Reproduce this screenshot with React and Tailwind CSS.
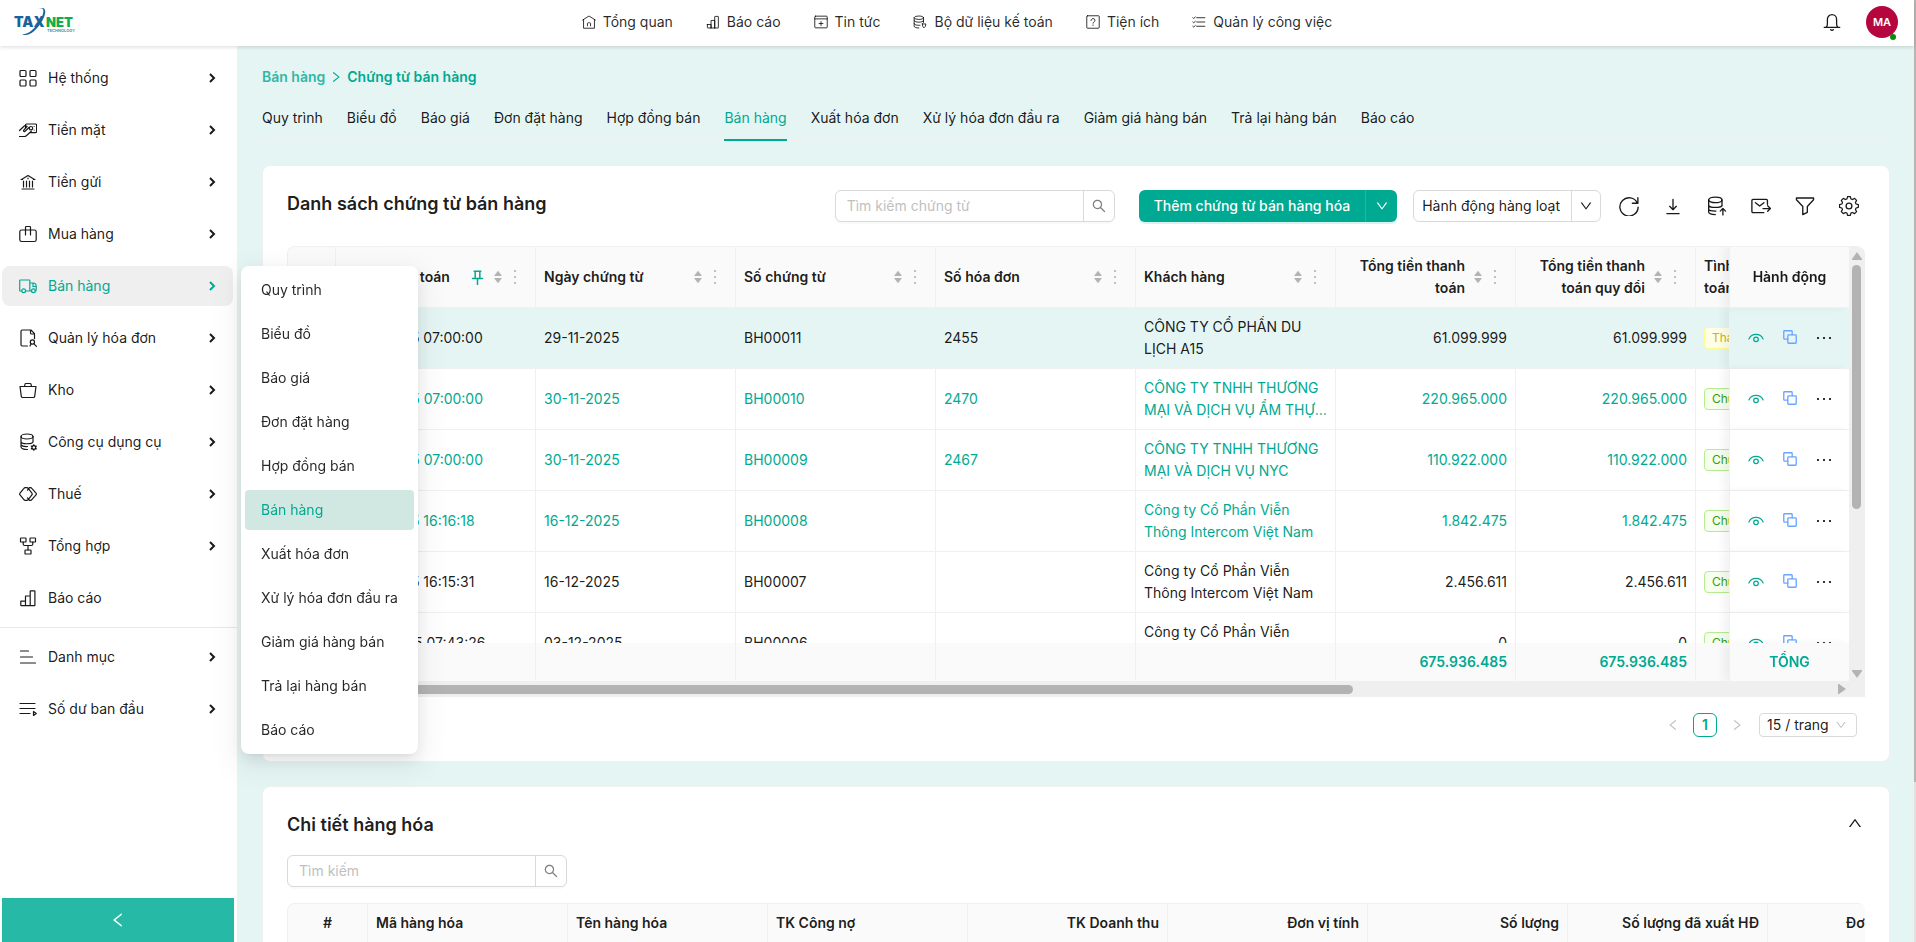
import { useState } from "react";
import clsx from "clsx";
import {
  AiOutlineDown,
  AiOutlineLeft,
  AiOutlineRight,
  AiOutlineSearch,
  AiOutlineUp,
} from "react-icons/ai";

/* ================== ICONS ================== */
const ICONS = {
  grid: (
    <>
      <rect x="1" y="1.5" width="6" height="6" rx="1" />
      <rect x="11" y="1.5" width="6" height="6" rx="1" />
      <rect x="1" y="11" width="6" height="6" rx="1" />
      <rect x="11" y="11" width="6" height="6" rx="1" />
    </>
  ),
  cash: (
    <>
      <path d="M6.5 6.5V4.2c0-.7.4-1.2 1.1-1.2h9c.6 0 1 .4 1 1v6.600c0 .6-.4 1-1 1h-5" />
      <circle cx="12" cy="7.200" r="1.700" />
      <path d="M15.200 5.500v.01M15.200 9v.01" />
      <path d="M.5 9.500 5 5.200c.6-.6 1.300-.8 2-.5M.5 15.500h4.700c.8 0 1.500-.3 2.100-.8l5-4.500M10 6.500 6 10.200c-.9.800-2-.2-1.200-1.100L8 5.500" />
    </>
  ),
  bank: (
    <>
      <path d="M2.500 6.500 9 2.500l6.500 4M2 6.500h1.500M14.500 6.500H16M9 5v.8M4.500 8v6M7.500 8v6M10.500 8v6M13.500 8v6M3 16h12" />
    </>
  ),
  bag: (
    <>
      <rect x=".8" y="5" width="16.400" height="11.500" rx="1.800" />
      <path d="M6.500 10V2.300c0-.5.3-.8.8-.8h3.400c.5 0 .8.300.8.800V10" />
    </>
  ),
  truck: (
    <>
      <path d="M2.500 14H1.300c-.4 0-.6-.3-.6-.6V3.600c0-.4.3-.6.6-.6h8.900c.4 0 .6.300.6.600V14H7M10.800 6h3.400c1.700 0 3 1.600 3 3.500V13c0 .6-.4 1-1 1M12.800 14h-2M14 6v3.500h3" />
      <circle cx="4.700" cy="13.700" r="1.900" />
      <circle cx="14.400" cy="13.700" r="1.900" />
    </>
  ),
  fileSearch: (
    <>
      <path d="M8.500 17H3.200c-.7 0-1.200-.5-1.200-1.200V2.200C2 1.500 2.500 1 3.200 1H12l3.500 3.700v5M11.500 1v3c0 .6.400 1 1 1h3" />
      <circle cx="13.400" cy="13" r="2.100" />
      <path d="m15 14.800 2.400 2.500M12 15l-1 2" />
    </>
  ),
  basket: (
    <>
      <path d="M1 5.500h16l-1.300 9.800c-.1.700-.6 1.200-1.300 1.200H3.600c-.7 0-1.200-.5-1.300-1.200L1 5.500ZM5.500 5.300 6 3.200c.1-.5.5-.7 1-.7h4c.5 0 .9.300 1 .700l.5 2.100" />
    </>
  ),
  dbGear: (
    <>
      <ellipse cx="8" cy="3.500" rx="6" ry="2.500" />
      <path d="M2 3.500V14c0 1.500 3 2.600 6.500 2.500M14 3.500V9M2 8.500c0 3 12 3 12 0M2 12c1 1.200 3.500 1.700 6.500 1.500" />
      <circle cx="14.800" cy="14.500" r="1.900" />
      <path d="M14.800 11.700v.9M14.800 16.400v.9M12.300 13.100l.8.400M16.500 15.500l.8.400M12.300 15.900l.8-.4M16.500 13.500l.8-.4" />
    </>
  ),
  tax: (
    <>
      <path d="M6.200 2.700h1.700c.5 0 1 .2 1.300.6l3.700 4.800c.4.500.4 1.300 0 1.800l-3.700 4.800c-.3.400-.8.600-1.300.600H6.200c-.5 0-1-.2-1.300-.6L1 9.900c-.4-.5-.4-1.300 0-1.800l3.900-4.800c.3-.4.800-.6 1.300-.6Z" />
      <path d="M10.500 2.700h1c.5 0 1 .2 1.300.6l4.200 4.800c.4.500.4 1.300 0 1.800l-4.200 4.800c-.3.400-.8.600-1.300.600h-1l-2-2.400M8.500 5.200l2-2.500" />
    </>
  ),
  flow: (
    <>
      <rect x="1.500" y="1" width="5.500" height="4" rx=".6" />
      <rect x="11" y="1" width="5.500" height="4" rx=".6" />
      <rect x="6" y="13" width="6" height="4" rx=".6" />
      <path d="M4.200 5v2c0 .8.600 1.500 1.400 1.500h6.800c.8 0 1.400-.7 1.400-1.500V5M9 8.500V13" />
    </>
  ),
  chart: (
    <path d="M1.800 12.200h4.700v4.500H2.300c-.3 0-.5-.2-.5-.5v-4ZM6.500 16.700V7h4.700v9.700M11.200 16.700V2.300c0-.3.200-.5.500-.5h3.700c.3 0 .5.200.5.500v13.900c0 .3-.2.500-.5.500H6.500" />
  ),
  listShort: <path d="M1.500 3h8M1.500 9h12M1.500 15h15" />,
  listPlay: <path d="M1 3.500h15M1 8.500h15M1 13.500h10M14.500 11.500v4l2.800-2-2.800-2Z" />,
  home: (
    <>
      <path d="M.8 6.500 9 1.300l8.200 5.200M2 6v11h14V6" />
      <path d="M7 14v-3c0-.6.400-1 1-1h2c.6 0 1 .4 1 1v3" />
    </>
  ),
  news: (
    <>
      <rect x="1" y="1.500" width="16" height="15" rx="1" />
      <path d="M1 5h16M9 8.500v5M6.500 11h5" />
    </>
  ),
  dbPin: (
    <>
      <ellipse cx="7.500" cy="3.500" rx="6" ry="2.200" />
      <path d="M1.500 3.500v11c0 1.300 2.500 2.200 6 2.200M13.500 3.500v6M1.500 7.300c0 2.700 12 2.700 12 0M1.500 11.200c0 1.500 4 2.300 7.500 2" />
      <path d="M12 11.500h4.500l-.5 3-2 2-1.500-2-.5-3Z" />
    </>
  ),
  help: (
    <>
      <rect x="1" y="1" width="16" height="16" rx="1" />
      <path d="M6.500 7c0-3.300 5-3.300 5 0 0 2-2.500 1.700-2.500 3.500M9 12.800v.6" />
    </>
  ),
  tasks: (
    <path d="M6 3.500h10.500M6 9h10.500M6 14.500h10.500M1 3.500l1.200 1L4.300 2.500M1 9l1.200 1 2.100-2M1 14.500l1.200 1 2.100-2" />
  ),
  refresh: <path d="M16.500 6.500A8.200 8.200 0 1 0 17.200 10M17 1.500v5h-5" />,
  download: <path d="M9 3v9M6 9.300 9 12.300l3-3M3.500 15.800h11" />,
  dbUp: (
    <>
      <ellipse cx="7.500" cy="3.500" rx="6" ry="2.500" />
      <path d="M1.500 3.500v11c0 1.300 2.500 2.200 6 2.200M13.500 3.500v5.300M1.500 8c0 3 12 3 12 0M1.500 12c0 1 2.500 1.700 6.500 1.600M14.300 17v-5.500M11.900 13.600l2.400-2.300 2.400 2.300" />
    </>
  ),
  mail: (
    <path d="M11.500 15H1.800c-.6 0-1-.4-1-1V4c0-.6.400-1 1-1h12c.6 0 1 .4 1 1v3.500M4 6l3.800 3L11.600 6M10.800 11.300h6.500M15 8.800l2.500 2.500-2.500 2.500" />
  ),
  funnel: (
    <path d="M1.300 1.800h15.400v1.600l-5.600 6v5.300L7 16.800V9.400l-5.700-6V1.800Z" />
  ),
  gear: (
    <>
      <path d="M7.700 1h2.600l.6 2.200 1.500.6 2-1.100 1.900 1.900-1.100 2 .6 1.500 2.200.6v2.600l-2.200.6-.6 1.500 1.100 2-1.900 1.900-2-1.100-1.500.6-.6 2.200H7.700l-.6-2.200-1.500-.6-2 1.100-1.900-1.900 1.100-2-.6-1.500L0 11.300V8.700l2.200-.6.600-1.500-1.100-2 1.900-1.900 2 1.100 1.500-.6L7.700 1Z" transform="translate(.5 -.4) scale(.94)" />
      <circle cx="9" cy="9" r="2.600" />
    </>
  ),
  bell: (
    <>
      <path d="M1.200 14.300h15.600M3.200 14.300c1-.9 1.200-2 1.200-3.500V6.500c0-2.800 2-4.800 4.600-4.800s4.600 2 4.600 4.800v4.300c0 1.500.2 2.600 1.200 3.500M7.700 16.600c.5.900 2.100.9 2.600 0" />
    </>
  ),
  eye: (
    <>
      <path d="M1 10c1.500-3.300 4.500-5 8-5s6.500 1.700 8 5" />
      <circle cx="9" cy="10.500" r="2.600" />
    </>
  ),
  copy: (
    <>
      <rect x="6.200" y="6.200" width="10.800" height="10.800" rx="1" />
      <path d="M6.200 11.800H2c-.6 0-1-.4-1-1V2c0-.6.400-1 1-1h8.800c.6 0 1 .4 1 1v4.200" />
    </>
  ),
  pin: <path d="M5 1.500h8M6.200 1.500v8M11.800 1.500v8M3 10.200h12M9 10.500V17.500" />,
};

function Icon({ name, className = "size-[18px]", stroke = 1.2 }) {
  return (
    <svg
      viewBox="0 0 18 18"
      className={clsx("shrink-0", className)}
      fill="none"
      stroke="currentColor"
      strokeWidth={stroke}
      strokeLinecap="round"
      strokeLinejoin="round"
      aria-hidden="true"
    >
      {ICONS[name]}
    </svg>
  );
}

/* ================== DATA ================== */
const TOP_NAV = [
  ["home", "Tổng quan"],
  ["chart", "Báo cáo"],
  ["news", "Tin tức"],
  ["dbPin", "Bộ dữ liệu kế toán"],
  ["help", "Tiện ích"],
  ["tasks", "Quản lý công việc"],
];

const SIDE_NAV = [
  ["grid", "Hệ thống"],
  ["cash", "Tiền mặt"],
  ["bank", "Tiền gửi"],
  ["bag", "Mua hàng"],
  ["truck", "Bán hàng"],
  ["fileSearch", "Quản lý hóa đơn"],
  ["basket", "Kho"],
  ["dbGear", "Công cụ dụng cụ"],
  ["tax", "Thuế"],
  ["flow", "Tổng hợp"],
  ["chart", "Báo cáo"],
];

const SIDE_NAV_BOTTOM = [
  ["listShort", "Danh mục"],
  ["listPlay", "Số dư ban đầu"],
];

const SALES_TABS = [
  "Quy trình",
  "Biểu đồ",
  "Báo giá",
  "Đơn đặt hàng",
  "Hợp đồng bán",
  "Bán hàng",
  "Xuất hóa đơn",
  "Xử lý hóa đơn đầu ra",
  "Giảm giá hàng bán",
  "Trả lại hàng bán",
  "Báo cáo",
];

const INTERCOM = "Công ty Cổ Phần Viễn Thông Intercom Việt Nam";

const ROWS = [
  {
    posted: "29-11-2025 07:00:00",
    date: "29-11-2025",
    code: "BH00011",
    invoice: "2455",
    customer: "CÔNG TY CỔ PHẦN DU LỊCH A15",
    total: "61.099.999",
    status: "Thanh toán một phần",
    selected: true,
  },
  {
    posted: "30-11-2025 07:00:00",
    date: "30-11-2025",
    code: "BH00010",
    invoice: "2470",
    customer: "CÔNG TY TNHH THƯƠNG MẠI VÀ DỊCH VỤ ẨM THỰC VIỆT NAM",
    total: "220.965.000",
    status: "Chưa thanh toán",
    green: true,
  },
  {
    posted: "30-11-2025 07:00:00",
    date: "30-11-2025",
    code: "BH00009",
    invoice: "2467",
    customer: "CÔNG TY TNHH THƯƠNG MẠI VÀ DỊCH VỤ NYC",
    total: "110.922.000",
    status: "Chưa thanh toán",
    green: true,
  },
  {
    posted: "16-12-2025 16:16:18",
    date: "16-12-2025",
    code: "BH00008",
    customer: INTERCOM,
    total: "1.842.475",
    status: "Chưa thanh toán",
    green: true,
  },
  {
    posted: "16-12-2025 16:15:31",
    date: "16-12-2025",
    code: "BH00007",
    customer: INTERCOM,
    total: "2.456.611",
    status: "Chưa thanh toán",
  },
  {
    posted: "03-12-2025 07:43:26",
    date: "03-12-2025",
    code: "BH00006",
    customer: INTERCOM,
    total: "0",
    status: "Chưa thanh toán",
  },
];

const COLUMNS = [
  { title: "Ngày hạch toán", pinned: true },
  { title: "Ngày chứng từ" },
  { title: "Số chứng từ" },
  { title: "Số hóa đơn" },
  { title: "Khách hàng" },
  { title: "Tổng tiền thanh toán", right: true },
  { title: "Tổng tiền thanh toán quy đổi", right: true },
  { title: "Tình trạng thanh toán" },
];

const DETAIL_COLUMNS = [
  { title: "Mã hàng hóa" },
  { title: "Tên hàng hóa" },
  { title: "TK Công nợ" },
  { title: "TK Doanh thu", right: true },
  { title: "Đơn vị tính", right: true },
  { title: "Số lượng", right: true },
  { title: "Số lượng đã xuất HĐ", right: true },
  { title: "Đơn giá sau thuế", right: true },
];

/* ================== LAYOUT PARTS ================== */
function Logo() {
  return (
    <svg viewBox="0 0 62 32" className="h-8 w-[62px]" role="img" aria-label="Taxnet Technology">
      <text x="1" y="21" fontFamily="Inter, sans-serif" fontSize="14" fontWeight="900" fill="#17659b">
        TAX
      </text>
      <text x="33" y="21" fontFamily="Inter, sans-serif" fontSize="13" fontWeight="900" fill="#0fae4b">
        NET
      </text>
      <text x="34" y="26" fontFamily="Inter, sans-serif" fontSize="4" fontWeight="600" fill="#2c8fa3">
        TECHNOLOGY
      </text>
      <path
        d="M24.500 3.500C29 .8 33.500 1.800 32 8c-1.600 7-9 17.500-16 20.300-3 1.200-5.600.9-6.500-.3 5 .6 10.500-4 15-9.800C29 12.300 32.500 3.500 29 2.500c-1.400-.4-3 .2-4.500 1Z"
        fill="#17659b"
      />
    </svg>
  );
}

function Header() {
  return (
    <header className="relative z-20 grid h-[46px] shrink-0 grid-cols-[1fr_auto_1fr] items-center bg-white pb-0.5 shadow-[0_1px_4px_rgba(0,0,0,0.15)]">
      <a href="#home" className="ml-[13px] justify-self-start">
        <Logo />
      </a>
      <nav className="flex gap-[33px]">
        {TOP_NAV.map(([icon, label]) => (
          <a key={label} href="#nav" className="flex items-center gap-[7px] whitespace-nowrap text-black/85">
            <Icon name={icon} className="size-[14px]" stroke={1.2} />
            {label}
          </a>
        ))}
      </nav>
      <div className="mr-4 flex items-center gap-[25px] justify-self-end">
        <button type="button" aria-label="Thông báo">
          <Icon name="bell" stroke={1.3} />
        </button>
        <button
          type="button"
          className="relative size-8 rounded-full bg-[#b5063f] text-[11px] font-semibold text-white"
        >
          MA
          <span className="absolute -bottom-0.5 right-0.5 size-1.5 rounded-full bg-[#0a8a0a]" />
        </button>
      </div>
    </header>
  );
}

function SideItem({ icon, label, active, arrow = true, onClick }) {
  return (
    <button
      type="button"
      onClick={onClick}
      className={clsx(
        "flex h-10 w-full items-center gap-[11px] rounded-lg pl-[17px] pr-4 text-left",
        active ? "bg-[#efefef] text-[#00a991]" : "hover:bg-gray-50"
      )}
    >
      <Icon name={icon} />
      <span className="flex-1">{label}</span>
      {arrow && (
        <svg viewBox="0 0 10 10" className="size-[10px]" fill="none" stroke="currentColor" strokeWidth="2" aria-hidden="true">
          <path d="m3 1 4 4-4 4" />
        </svg>
      )}
    </button>
  );
}

function Sidebar({ active, setActive }) {
  return (
    <aside className="flex w-[237px] shrink-0 flex-col bg-white">
      <div className="flex flex-col gap-3 pb-[9px] pl-0.5 pr-1 pt-3">
        {SIDE_NAV.map(([icon, label], i) => (
          <SideItem
            key={label}
            icon={icon}
            label={label}
            arrow={i < SIDE_NAV.length - 1}
            active={active === label}
            onClick={() => setActive(label)}
          />
        ))}
      </div>
      <div className="flex flex-1 flex-col gap-3 border-t border-[#e8e8e8] pl-0.5 pr-1 pt-[9px]">
        {SIDE_NAV_BOTTOM.map(([icon, label]) => (
          <SideItem key={label} icon={icon} label={label} />
        ))}
      </div>
      <button
        type="button"
        aria-label="Thu gọn"
        className="ml-0.5 mr-[3px] flex h-11 items-center justify-center bg-[#26baa6] text-white"
      >
        <AiOutlineLeft className="size-[18px]" />
      </button>
    </aside>
  );
}

function Flyout() {
  return (
    <div className="absolute left-[241px] top-[266px] z-30 w-[177px] rounded-lg bg-white p-1 shadow-[0_6px_16px_rgba(0,0,0,0.08),0_3px_6px_-4px_rgba(0,0,0,0.12),0_9px_28px_8px_rgba(0,0,0,0.05)]">
      <ul className="flex flex-col gap-1">
        {SALES_TABS.map((label) => (
          <li key={label}>
            <a
              href="#sub"
              className={clsx(
                "flex h-10 items-center rounded px-4",
                label === "Bán hàng" ? "bg-[#d1e8e2] text-[#00a991]" : "text-black/85"
              )}
            >
              {label}
            </a>
          </li>
        ))}
      </ul>
    </div>
  );
}

function SearchBox({ placeholder }) {
  return (
    <div className="flex h-8 w-[280px] rounded-md border border-[#d9d9d9] bg-white shadow-[0_2px_0_rgba(0,0,0,0.02)]">
      <input
        type="text"
        aria-label={placeholder}
        placeholder={placeholder}
        className="min-w-0 flex-1 px-[11px] outline-none placeholder:text-[#bfbfbf]"
      />
      <button
        type="button"
        aria-label="Tìm"
        className="flex w-[31px] items-center justify-center border-l border-[#d9d9d9] text-black/50"
      >
        <AiOutlineSearch className="size-4" />
      </button>
    </div>
  );
}

function ToolButton({ icon, label }) {
  return (
    <button type="button" aria-label={label} className="flex size-8 items-center justify-center">
      <Icon name={icon} className="size-5" />
    </button>
  );
}

/* ================== MAIN TABLE ================== */
function HeadCell({ col }) {
  return (
    <th className="sticky top-0 z-10 border-b border-r border-[#f0f0f0] bg-[#fafafa] px-2 py-2 font-semibold">
      <div className="flex h-11 items-center">
        <span className={clsx("flex-1", col.right ? "text-right" : "text-left")}>{col.title}</span>
        {col.pinned && <Icon name="pin" className="size-[15px] text-[#00a991]" stroke={1.8} />}
        <svg viewBox="0 0 10 14" className="ml-2 h-[14px] w-[10px] shrink-0 fill-[#b3b3b3]" aria-hidden="true">
          <path d="M5 .8 9 6H1L5 .8ZM5 13.200 1 8h8l-4 5.200Z" />
        </svg>
        <svg viewBox="0 0 24 16" className="h-4 w-6 shrink-0 fill-[#bfbfbf]" aria-hidden="true">
          <path d="M11 1h2v2h-2zM11 7h2v2h-2zM11 13h2v2h-2z" />
        </svg>
      </div>
    </th>
  );
}

function Row({ row }) {
  const cell = clsx(
    "border-b border-r border-[#f0f0f0] px-2 py-2",
    row.selected ? "bg-[#e5f5f4]" : "bg-white",
    row.green && "text-[#00a991]"
  );
  return (
    <tr>
      <td className={cell} />
      <td className={cell}>{row.posted}</td>
      <td className={cell}>{row.date}</td>
      <td className={cell}>{row.code}</td>
      <td className={cell}>{row.invoice}</td>
      <td className={cell}>
        <div className="line-clamp-2 h-11">{row.customer}</div>
      </td>
      <td className={clsx(cell, "text-right")}>{row.total}</td>
      <td className={clsx(cell, "text-right")}>{row.total}</td>
      <td className={cell}>
        <span
          className={clsx(
            "block w-fit whitespace-nowrap rounded border px-[7px] text-xs leading-5",
            row.selected
              ? "border-[#fffb8f] bg-[#feffe6] text-[#d4b106]"
              : "border-[#b7eb8f] bg-[#f6ffed] text-[#389e0d]"
          )}
        >
          {row.status}
        </span>
      </td>
      <td
        className={clsx(
          "sticky right-0 border-b border-l border-[#f0f0f0] shadow-[-6px_0_8px_rgba(0,0,0,0.05)]",
          row.selected ? "bg-[#e5f5f4]" : "bg-white"
        )}
      >
        <div className="flex justify-center gap-4">
          <button type="button" aria-label="Xem" className="flex w-[18px] justify-center text-[#00a991]">
            <Icon name="eye" className="size-4" stroke={1.4} />
          </button>
          <button type="button" aria-label="Sao chép" className="flex w-[18px] justify-center text-[#69a5ff]">
            <Icon name="copy" className="size-[14px]" stroke={1.7} />
          </button>
          <button type="button" aria-label="Thêm" className="flex w-[18px] justify-center">
            <svg viewBox="0 0 16 16" className="size-4 fill-black/80" aria-hidden="true">
              <path d="M1 7h2v2H1zM7 7h2v2H7zM13 7h2v2h-2z" />
            </svg>
          </button>
        </div>
      </td>
    </tr>
  );
}

function VoucherTable() {
  const foot = "sticky bottom-0 border-r border-[#f0f0f0] bg-[#fafafa] px-2";
  return (
    <div className="overflow-hidden rounded-t-lg border-l border-t border-[#f0f0f0]">
      <div className="flex">
        <div className="h-[434px] min-w-0 flex-1 overflow-hidden">
          <table className="w-[1710px] table-fixed border-separate border-spacing-0">
            <colgroup>
              <col className="w-12" />
              <col className="w-[200px]" />
              <col className="w-[200px]" />
              <col className="w-[200px]" />
              <col className="w-[200px]" />
              <col className="w-[200px]" />
              <col className="w-[180px]" />
              <col className="w-[180px]" />
              <col />
              <col className="w-[120px]" />
            </colgroup>
            <thead>
              <tr>
                <td className="sticky top-0 z-10 border-b border-r border-[#f0f0f0] bg-[#fafafa]" />
                {COLUMNS.map((col) => (
                  <HeadCell key={col.title} col={col} />
                ))}
                <th className="sticky right-0 top-0 z-20 border-b border-l border-[#f0f0f0] bg-[#fafafa] font-semibold shadow-[-6px_0_8px_rgba(0,0,0,0.05)]">
                  Hành động
                </th>
              </tr>
            </thead>
            <tbody>
              {ROWS.map((row) => (
                <Row key={row.code} row={row} />
              ))}
            </tbody>
            <tfoot className="font-semibold text-[#00a991]">
              <tr className="h-[38px]">
                {[0, 1, 2, 3, 4, 5].map((i) => (
                  <td key={i} className={foot} />
                ))}
                <td className={clsx(foot, "text-right")}>675.936.485</td>
                <td className={clsx(foot, "text-right")}>675.936.485</td>
                <td className={foot} />
                <td className="sticky bottom-0 right-0 z-10 border-l border-[#f0f0f0] bg-[#fafafa] text-center shadow-[-6px_0_8px_rgba(0,0,0,0.05)]">
                  TỔNG
                </td>
              </tr>
            </tfoot>
          </table>
        </div>
        {/* vertical scroll bar */}
        <div className="flex w-4 shrink-0 flex-col items-center justify-between bg-[#efefef] pb-[3px] pt-[5px]">
          <div>
            <svg viewBox="0 0 10 8" className="h-2 w-[10px] fill-[#b3b3b3]" aria-hidden="true">
              <path d="M5 0 10 7v1H0V7Z" />
            </svg>
            <div className="mt-[5px] h-[244px] w-[9px] rounded-full bg-[#b3b3b3]" />
          </div>
          <svg viewBox="0 0 10 8" className="h-2 w-[10px] fill-[#b3b3b3]" aria-hidden="true">
            <path d="M5 8 0 1V0h10v1Z" />
          </svg>
        </div>
      </div>
      {/* horizontal scroll bar */}
      <div className="flex h-4 items-center justify-between bg-[#efefef] pl-4 pr-[19px]">
        <div className="h-[9px] w-[68%] rounded-full bg-[#b3b3b3]" />
        <svg viewBox="0 0 8 10" className="h-[10px] w-2 fill-[#b3b3b3]" aria-hidden="true">
          <path d="M8 5 1 10H0V0h1Z" />
        </svg>
      </div>
    </div>
  );
}

function Pagination() {
  return (
    <div className="mt-4 flex h-6 items-center justify-end pr-2">
      <button type="button" aria-label="Trang trước" className="flex size-6 items-center justify-center text-[#bfbfbf]">
        <AiOutlineLeft className="size-[14px]" />
      </button>
      <button
        type="button"
        className="mx-2 size-6 rounded-md border border-[#00a991] font-semibold leading-5 text-[#00a991]"
      >
        1
      </button>
      <button type="button" aria-label="Trang sau" className="flex size-6 items-center justify-center text-[#bfbfbf]">
        <AiOutlineRight className="size-[14px]" />
      </button>
      <div className="relative ml-2.5">
        <select
          aria-label="Số dòng mỗi trang"
          className="h-6 w-[98px] appearance-none rounded border border-[#d9d9d9] bg-white pl-[7px] pr-6"
        >
          <option>15 / trang</option>
          <option>30 / trang</option>
        </select>
        <AiOutlineDown className="pointer-events-none absolute right-2.5 top-1.5 size-3 text-[#bfbfbf]" />
      </div>
    </div>
  );
}

function VoucherCard() {
  return (
    <section className="rounded-lg border border-[#f0f0f0] bg-white p-6">
      <div className="mb-6 flex">
        <h1 className="flex-1 text-lg leading-7 font-semibold">Danh sách chứng từ bán hàng</h1>
        <SearchBox placeholder="Tìm kiếm chứng từ" />
        <div className="ml-6 flex h-8 rounded-md bg-[#00a991] font-medium text-white shadow-[0_2px_0_rgba(0,169,145,0.15)]">
          <button type="button" className="px-[15px]">
            Thêm chứng từ bán hàng hóa
          </button>
          <button
            type="button"
            aria-label="Loại chứng từ"
            className="flex w-8 items-center justify-center border-l border-[#1fb8a2]"
          >
            <AiOutlineDown className="size-[14px]" />
          </button>
        </div>
        <div className="ml-4 mr-3 flex h-8 rounded-md border border-[#d9d9d9]">
          <button type="button" className="pl-2 pr-[11px]">
            Hành động hàng loạt
          </button>
          <button
            type="button"
            aria-label="Chọn hành động"
            className="flex w-[29px] items-center justify-center border-l border-[#d9d9d9]"
          >
            <AiOutlineDown className="size-[14px]" />
          </button>
        </div>
        <div className="flex gap-3">
          <ToolButton icon="refresh" label="Tải lại" />
          <ToolButton icon="download" label="Tải xuống" />
          <ToolButton icon="dbUp" label="Nhập dữ liệu" />
          <ToolButton icon="mail" label="Gửi mail" />
          <ToolButton icon="funnel" label="Lọc" />
          <ToolButton icon="gear" label="Cài đặt" />
        </div>
      </div>
      <VoucherTable />
      <Pagination />
    </section>
  );
}

function DetailCard() {
  const [open, setOpen] = useState(true);
  return (
    <section className="mt-6 rounded-lg border border-[#f0f0f0] bg-white p-6">
      <div className="flex items-start justify-between pr-0.5">
        <h2 className="text-lg leading-7 font-semibold">Chi tiết hàng hóa</h2>
        <button type="button" className="mt-1" aria-label="Thu gọn chi tiết" onClick={() => setOpen(!open)}>
          <AiOutlineUp className="size-4" />
        </button>
      </div>
      {open && (
        <>
          <div className="my-4">
            <SearchBox placeholder="Tìm kiếm" />
          </div>
          <div className="overflow-hidden rounded-t-lg border-l border-t border-[#f0f0f0]">
            <table className="w-[1680px] table-fixed border-separate border-spacing-0">
              <thead>
                <tr className="h-[39px] bg-[#fafafa]">
                  <th className="w-20 border-b border-r border-[#f0f0f0] font-semibold">#</th>
                  {DETAIL_COLUMNS.map((col) => (
                    <th
                      key={col.title}
                      className={clsx(
                        "w-[200px] border-b border-r border-[#f0f0f0] px-2 font-semibold whitespace-nowrap",
                        col.right ? "text-right" : "text-left"
                      )}
                    >
                      {col.title}
                    </th>
                  ))}
                </tr>
              </thead>
            </table>
          </div>
        </>
      )}
    </section>
  );
}

export default function App() {
  const [active, setActive] = useState("Bán hàng");

  return (
    <div className="relative flex h-screen overflow-hidden bg-white font-[Inter,'Noto_Sans',sans-serif] text-sm leading-[22px] text-black/90">
      <div className="flex min-w-0 flex-1 flex-col">
        <Header />
        <div className="flex min-h-0 flex-1">
          <Sidebar active={active} setActive={setActive} />
          <main className="min-w-0 flex-1 overflow-hidden bg-[#e5f5f4] pl-[25px] pr-6 pt-5">
            <nav aria-label="Breadcrumb" className="mb-[7px] flex items-center font-semibold text-[#00a991]">
              <a href="#sales" className="opacity-80">
                Bán hàng
              </a>
              <AiOutlineRight className="mx-1 size-[14px]" />
              <span>Chứng từ bán hàng</span>
            </nav>
            <nav className="mb-6 flex gap-6 border-b border-[#f0f0f0]">
              {SALES_TABS.map((label) => (
                <a
                  key={label}
                  href="#tab"
                  className={clsx(
                    "-mb-px border-b-2 pb-2.5 pt-3",
                    label === "Bán hàng" ? "border-[#00a991] text-[#00a991]" : "border-transparent"
                  )}
                >
                  {label}
                </a>
              ))}
            </nav>
            <VoucherCard />
            <DetailCard />
          </main>
        </div>
      </div>
      {/* page scroll bar */}
      <div className="w-0.5 shrink-0 bg-[#e6e1e1]">
        <div className="h-[83%] bg-[#bab4b4]" />
      </div>
      {active === "Bán hàng" && <Flyout />}
    </div>
  );
}
